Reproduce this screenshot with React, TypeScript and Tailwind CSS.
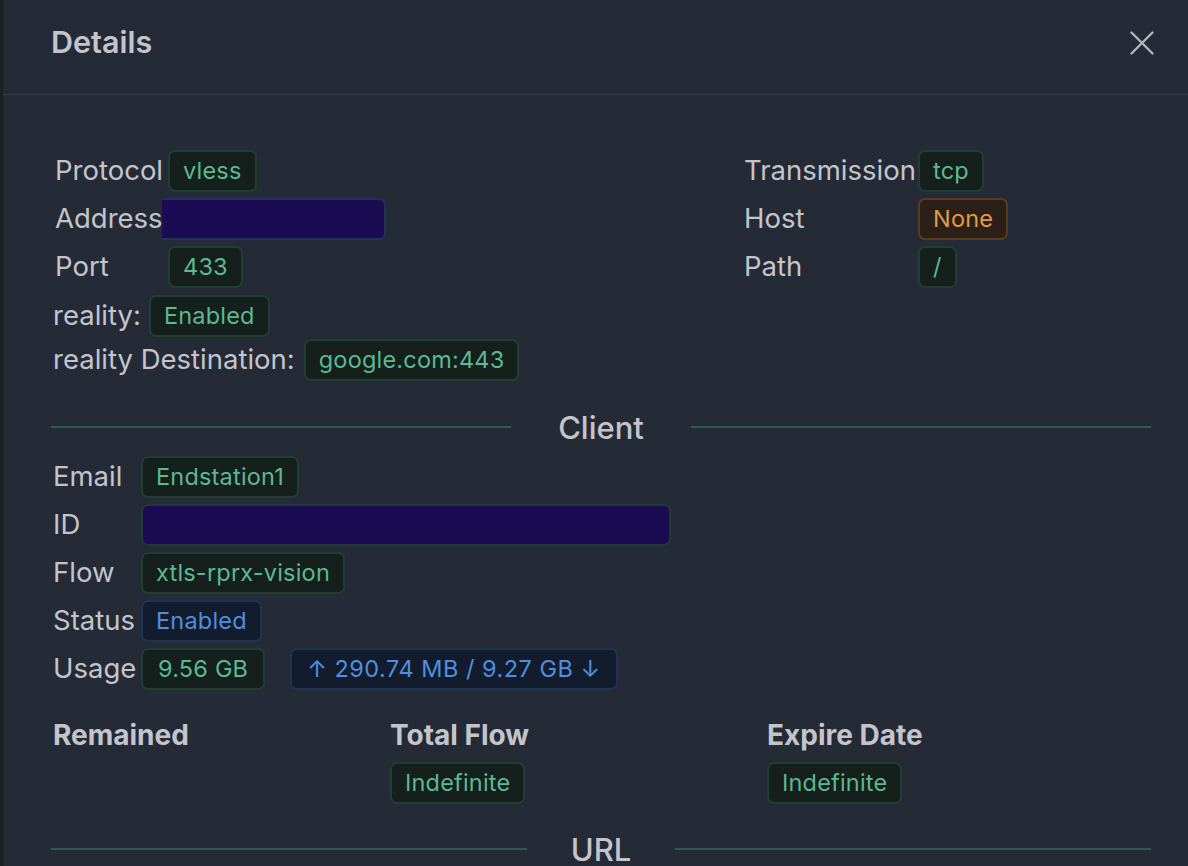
import React from "react";

type Tone = "green" | "blue" | "orange";

const toneClass: Record<Tone, string> = {
  green: "bg-[#151f1c] border-[#213e33] text-[#5cb992]",
  blue: "bg-[#131c2c] border-[#1d3554] text-[#4f8fdf]",
  orange: "bg-[#2a2017] border-[#5a3b1d] text-[#e39a48]",
};

function Tag({ children, tone = "green", className = "" }: { children?: React.ReactNode; tone?: Tone; className?: string }) {
  return (
    <span
      className={`inline-flex h-[42px] items-center whitespace-nowrap rounded-[7px] border-2 px-[13px] text-[23.5px] leading-none tracking-[0.2px] ${toneClass[tone]} ${className}`}
    >
      {children}
    </span>
  );
}

function Redacted({ className = "" }: { className?: string }) {
  return <span className={`inline-block h-[42px] bg-[#1a0b52] ${className}`} />;
}

function Row({ label, labelW, children }: { label: string; labelW: string; children?: React.ReactNode }) {
  return (
    <div className="flex h-[48px] items-center pt-[1px]">
      <span className={`${labelW} shrink-0 whitespace-nowrap`}>{label}</span>
      {children}
    </div>
  );
}

function Divider({ title, gap }: { title: string; gap: string }) {
  return (
    <div className={`flex h-[46px] items-center ${gap}`}>
      <div className="h-[2px] flex-1 bg-[#2f5a50]" />
      <span className="text-[31px] font-medium leading-none text-[#c4c5cb]">{title}</span>
      <div className="h-[2px] flex-1 bg-[#2f5a50]" />
    </div>
  );
}

export default function App() {
  return (
    <div
      className="flex min-h-screen w-full flex-col overflow-hidden border-l-[3px] border-[#1c2028] bg-[#252a37] text-[27.5px] text-[#c4c5cb]"
      style={{ fontFamily: "Inter, 'Noto Sans', sans-serif" }}
    >
      <header className="flex items-start justify-between border-b border-[#363c48] pb-[32px] pl-[48px] pr-[33px] pt-[22px]">
        <h1 className="text-[30.5px] font-semibold leading-[40px] text-[#c4c5cb]">Details</h1>
        <button className="mt-[8px] text-[#b4b5bc]" aria-label="Close">
          <svg width="26" height="26" viewBox="0 0 26 26" fill="none" stroke="currentColor" strokeWidth="2.4" strokeLinecap="round">
            <path d="M2.5 2.5 L23.5 23.5 M23.5 2.5 L2.5 23.5" />
          </svg>
        </button>
      </header>

      <div className="pl-[48px] pr-[37px] pt-[51px]">
        <div className="flex">
          <div className="w-[693px] pl-[4px]">
            <Row label="Protocol" labelW="w-[113px]">
              <Tag>vless</Tag>
            </Row>
            <Row label="Address" labelW="w-[107px]">
              <Redacted className="w-[224px] rounded-r-[7px] border-2 border-l-0 border-[#1e3557]" />
            </Row>
            <Row label="Port" labelW="w-[113px]">
              <Tag>433</Tag>
            </Row>
          </div>
          <div>
            <Row label="Transmission" labelW="w-[174px]">
              <Tag>tcp</Tag>
            </Row>
            <Row label="Host" labelW="w-[174px]">
              <Tag tone="orange">None</Tag>
            </Row>
            <Row label="Path" labelW="w-[174px]">
              <Tag>/</Tag>
            </Row>
          </div>
        </div>

        <div className="mt-[4px] flex h-[44px] items-center gap-[8px] pl-[2px]">
          <span>reality:</span>
          <Tag>Enabled</Tag>
        </div>
        <div className="flex h-[44px] items-center gap-[9px] pl-[2px]">
          <span>reality Destination:</span>
          <Tag>google.com:443</Tag>
        </div>

        <div className="mt-[22px]">
          <Divider title="Client" gap="gap-[47px]" />
        </div>

        <div className="mt-[2px] pl-[2px]">
          <Row label="Email" labelW="w-[88px]">
            <Tag>Endstation1</Tag>
          </Row>
          <Row label="ID" labelW="w-[88px]">
            <Redacted className="w-[530px] rounded-[7px] border-2 border-[#1f3a30]" />
          </Row>
          <Row label="Flow" labelW="w-[88px]">
            <Tag>xtls-rprx-vision</Tag>
          </Row>
          <Row label="Status" labelW="w-[88px]">
            <Tag tone="blue">Enabled</Tag>
          </Row>
          <Row label="Usage" labelW="w-[88px]">
            <div className="flex items-center gap-[25px]">
              <Tag className="px-[15px]">9.56 GB</Tag>
              <Tag tone="blue" className="px-[15px] tracking-[0.5px]">↑ 290.74 MB / 9.27 GB ↓</Tag>
            </div>
          </Row>
        </div>

        <div className="mt-[27px] grid grid-cols-[337px_377px_1fr] pl-[2px]">
          <div>
            <div className="text-[28px] font-bold leading-[32px]">Remained</div>
          </div>
          <div>
            <div className="text-[28px] font-bold leading-[32px]">Total Flow</div>
            <Tag className="mt-[11px]">Indefinite</Tag>
          </div>
          <div>
            <div className="text-[28px] font-bold leading-[32px]">Expire Date</div>
            <Tag className="mt-[11px]">Indefinite</Tag>
          </div>
        </div>

        <div className="mt-[22px]">
          <Divider title="URL" gap="gap-[44px]" />
        </div>
      </div>
    </div>
  );
}
